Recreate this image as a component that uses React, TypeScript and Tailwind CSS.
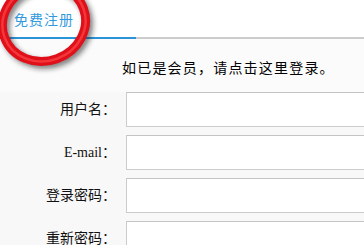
import React from "react";

const font = { fontFamily: '"Liberation Serif", "Noto Sans CJK SC", serif' };

function Row({ label }: { label: string }) {
  return (
    <div className="flex items-center h-[35px]">
      <div className="w-[116px] shrink-0 whitespace-nowrap text-right text-[14px] text-[#111] leading-none">{label}</div>
      <div className="ml-[10px] w-[300px] h-[35px] shrink-0 bg-white border border-[#cccccc] border-t-[#c4c4c4]" />
    </div>
  );
}

export default function App() {
  return (
    <div className="relative w-[364px] h-[245px] overflow-hidden bg-[#fbfbfb]" style={font}>
      <div className="flex h-[39px] bg-white">
        <div className="w-[136px] shrink-0 border-b-2 border-[#2b93d8] pl-[14px] pt-[9px] text-[14px] tracking-[1px] text-[#3399dd]" style={{ fontFamily: '"Noto Sans CJK SC", sans-serif' }}>
          免费注册
        </div>
        <div className="flex-1 border-b-2 border-[#cccccc]" />
      </div>
      <div className="pl-[122px] pt-[23px] h-[53px] whitespace-nowrap text-[14px] tracking-[1.2px] text-black leading-none">
        如已是会员，请点击这里登录。
      </div>
      <div className="flex flex-col gap-[8px] bg-[#f8f8f8]">
        <Row label="用户名：" />
        <Row label="E-mail：" />
        <Row label="登录密码：" />
        <Row label="重新密码：" />
      </div>
      <svg className="absolute left-0 top-0 pointer-events-none" width="130" height="100" viewBox="0 0 130 100">
        <defs>
          <filter id="sh" x="-30%" y="-30%" width="160%" height="160%">
            <feGaussianBlur stdDeviation="2.5" />
          </filter>
        </defs>
        <ellipse cx="47" cy="26" rx="42" ry="38" transform="rotate(-20 47 26)" fill="none" stroke="#222" strokeOpacity="0.55" strokeWidth="9" filter="url(#sh)" />
        <ellipse cx="44" cy="23" rx="42" ry="38" transform="rotate(-20 44 23)" fill="none" stroke="#e0101a" strokeWidth="9" />
        <ellipse cx="44" cy="23" rx="42" ry="38" transform="rotate(-20 44 23)" fill="none" stroke="#ff5050" strokeWidth="2.5" strokeOpacity="0.6" />
      </svg>
    </div>
  );
}
